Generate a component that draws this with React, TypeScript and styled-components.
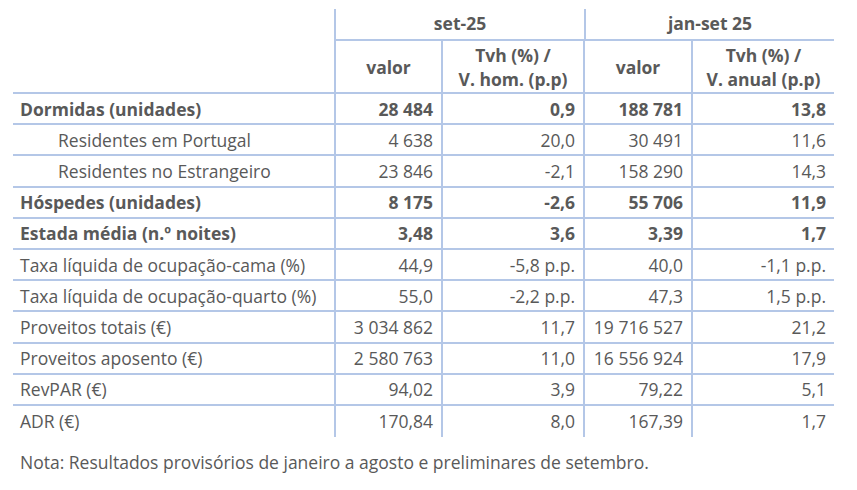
import React from "react";
import styled, { createGlobalStyle } from "styled-components";

const Global = createGlobalStyle`
  html, body { margin: 0; padding: 0; background: #ffffff; }
  body { font-family: "Open Sans", "Noto Sans", sans-serif; color: #595959; }
`;

const LINE = "#b4c7e7";
const FS = "17.5px";
const COLS = "321px 107px 142px 108px 143px";

const Page = styled.div`
  padding: 9px 0 0 13px;
  width: 844px;
`;

const Table = styled.div`
  display: flex;
  flex-direction: column;
  width: 821px;
`;

const TopHeader = styled.div`
  display: grid;
  grid-template-columns: 321px 250px 250px;
  height: 32px;
`;

const GroupCell = styled.div<{ $empty?: boolean }>`
  box-sizing: border-box;
  display: flex;
  align-items: center;
  justify-content: center;
  font-weight: 700;
  font-size: ${FS};
  border-left: ${(p) => (p.$empty ? "none" : `2px solid ${LINE}`)};
  border-bottom: ${(p) => (p.$empty ? "none" : `2px solid ${LINE}`)};
  padding-bottom: 2px;
`;

const Row = styled.div<{ $h: number; $last?: boolean }>`
  display: grid;
  grid-template-columns: ${COLS};
  box-sizing: border-box;
  height: ${(p) => p.$h}px;
  border-bottom: ${(p) => (p.$last ? "none" : `2px solid ${LINE}`)};
`;

const HeadCell = styled.div<{ $first?: boolean }>`
  box-sizing: border-box;
  display: flex;
  align-items: center;
  justify-content: center;
  text-align: center;
  font-weight: 700;
  font-size: ${FS};
  line-height: 24px;
  border-left: ${(p) => (p.$first ? "none" : `2px solid ${LINE}`)};
`;

const Label = styled.div<{ $bold?: boolean; $indent?: boolean }>`
  box-sizing: border-box;
  display: flex;
  align-items: center;
  padding-left: ${(p) => (p.$indent ? 45 : 7)}px;
  font-size: ${FS};
  font-weight: ${(p) => (p.$bold ? 700 : 400)};
  white-space: nowrap;
`;

const Num = styled.div<{ $bold?: boolean }>`
  box-sizing: border-box;
  display: flex;
  align-items: center;
  justify-content: flex-end;
  padding-right: 8px;
  font-size: ${FS};
  font-weight: ${(p) => (p.$bold ? 700 : 400)};
  white-space: nowrap;
  border-left: 2px solid ${LINE};
`;

const Note = styled.div`
  margin-top: 13px;
  padding-left: 7px;
  font-size: ${FS};
`;

type R = { label: string; v: string[]; bold?: boolean; indent?: boolean };

const rows: R[] = [
  { label: "Dormidas (unidades)", v: ["28 484", "0,9", "188 781", "13,8"], bold: true },
  { label: "Residentes em Portugal", v: ["4 638", "20,0", "30 491", "11,6"], indent: true },
  { label: "Residentes no Estrangeiro", v: ["23 846", "-2,1", "158 290", "14,3"], indent: true },
  { label: "Hóspedes (unidades)", v: ["8 175", "-2,6", "55 706", "11,9"], bold: true },
  { label: "Estada média (n.º noites)", v: ["3,48", "3,6", "3,39", "1,7"], bold: true },
  { label: "Taxa líquida de ocupação-cama (%)", v: ["44,9", "-5,8 p.p.", "40,0", "-1,1 p.p."] },
  { label: "Taxa líquida de ocupação-quarto (%)", v: ["55,0", "-2,2 p.p.", "47,3", "1,5 p.p."] },
  { label: "Proveitos totais (€)", v: ["3 034 862", "11,7", "19 716 527", "21,2"] },
  { label: "Proveitos aposento (€)", v: ["2 580 763", "11,0", "16 556 924", "17,9"] },
  { label: "RevPAR (€)", v: ["94,02", "3,9", "79,22", "5,1"] },
  { label: "ADR (€)", v: ["170,84", "8,0", "167,39", "1,7"] },
];

export default function App() {
  return (
    <Page>
      <Global />
      <Table>
        <TopHeader>
          <GroupCell $empty />
          <GroupCell>set-25</GroupCell>
          <GroupCell>jan-set 25</GroupCell>
        </TopHeader>
        <Row $h={53}>
          <HeadCell $first />
          <HeadCell>valor</HeadCell>
          <HeadCell>
            Tvh (%) /<br />V. hom. (p.p)
          </HeadCell>
          <HeadCell>valor</HeadCell>
          <HeadCell>
            Tvh (%) /<br />V. anual (p.p)
          </HeadCell>
        </Row>
        {rows.map((r, i) => (
          <Row key={r.label} $h={31.2} $last={i === rows.length - 1}>
            <Label $bold={r.bold} $indent={r.indent}>
              {r.label}
            </Label>
            {r.v.map((x, j) => (
              <Num key={j} $bold={r.bold}>
                {x}
              </Num>
            ))}
          </Row>
        ))}
      </Table>
      <Note>Nota: Resultados provisórios de janeiro a agosto e preliminares de setembro.</Note>
    </Page>
  );
}
